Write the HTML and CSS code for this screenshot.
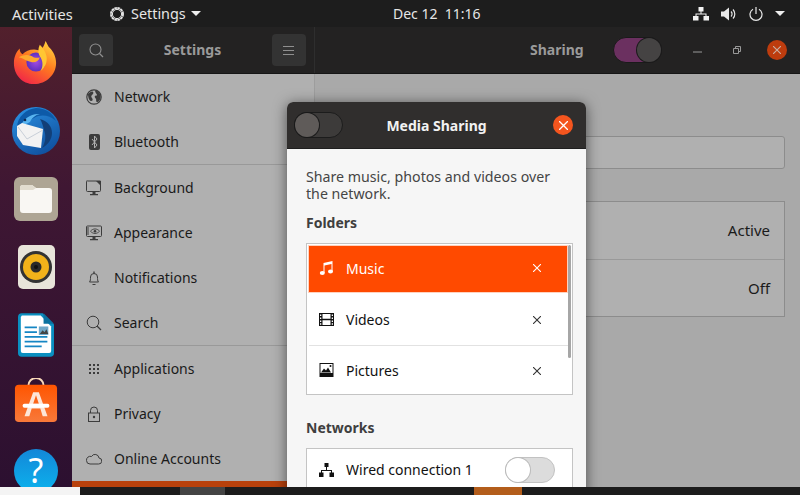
FILE: index.html

```html
<!DOCTYPE html>
<html lang="en">
<head>
  <meta charset="UTF-8" />
  <meta name="viewport" content="width=device-width, initial-scale=1.0"/>
  <title>Settings - Sharing</title>
  <link rel="stylesheet" href="styles.css">
</head>
<body>
  <div class="topbar">
    <div class="top-left">
      <span class="activities">Activities</span>
      <svg class="gear" width="16" height="16" viewBox="0 0 16 16"><circle cx="8" cy="8" r="6" fill="none" stroke="#e4e4e4" stroke-width="2" stroke-dasharray="2.6 .5"/><circle cx="8" cy="8" r="4.6" fill="none" stroke="#e4e4e4" stroke-width="1"/></svg>
      <span class="app-name">Settings</span>
      <span class="caret"></span>
    </div>
    <div class="clock">Dec 12&nbsp;&nbsp;11:16</div>
    <div class="top-right">
      <svg width="16" height="14" viewBox="0 0 16 14"><path d="M5.5 0h5v4.500h-5zM0 9h5.500v4.500H0zM10.500 9H16v4.500h-5.500zM7.500 4.500h1V6.500H13.500V9h-1V7.500h-9V9h-1V6.500h5z" fill="#f2f2f2"/></svg>
      <svg width="16" height="14" viewBox="0 0 16 14"><path d="M0 4.500h3L8 .5v13l-5-4H0z" fill="#e8e8e8"/><path d="M10 4.500a3.500 3.500 0 0 1 0 5M12 2.500a6.500 6.500 0 0 1 0 9" fill="none" stroke="#e8e8e8" stroke-width="1.200"/></svg>
      <svg width="14" height="14" viewBox="0 0 14 14"><path d="M4 2.200a6 6 0 1 0 6 0M7 0v7" fill="none" stroke="#e8e8e8" stroke-width="1.200"/></svg>
      <span class="caret"></span>
    </div>
  </div>

  <div class="desktop">
    <div class="dock">
      <svg class="dock-icon" width="46" height="46" viewBox="0 0 48 48">
        <defs>
          <linearGradient id="fx" x1="0.8" y1="0" x2="0.2" y2="1"><stop offset="0" stop-color="#ffd33d"/><stop offset=".45" stop-color="#ff7a1f"/><stop offset="1" stop-color="#f0214a"/></linearGradient>
          <radialGradient id="fxp"><stop offset="0" stop-color="#a34be0"/><stop offset="1" stop-color="#5c2fc0"/></radialGradient>
          <linearGradient id="tb" x1="0.2" y1="0" x2="0.8" y2="1"><stop offset="0" stop-color="#2a8fe0"/><stop offset="1" stop-color="#0e4d9c"/></linearGradient>
          <linearGradient id="help" x1="0" y1="0" x2="0" y2="1"><stop offset="0" stop-color="#1387d8"/><stop offset="1" stop-color="#0cb3ee"/></linearGradient>
          <linearGradient id="shop" x1="0" y1="0" x2="0" y2="1"><stop offset="0" stop-color="#ff5500"/><stop offset="1" stop-color="#f8793a"/></linearGradient>
        </defs>
        <path d="M2 25C2 18 5 13 8 10c0 3 1 5 3 6 3-3 7-5 12-5 3 0 4 1 6 1 3-2 5-6 6-10 2 3 2 5 5 8 3 3 6 9 6 15 0 12-10 22-23 22S2 37 2 25z" fill="url(#fx)"/>
        <circle cx="25" cy="24" r="10" fill="url(#fxp)"/>
        <path d="M7 19c5-3 10-3 14-1 2 2 6 2 8 1-1 4-5 6-9 5-5-1-8-4-13-5z" fill="#ffa92e"/>
        <path d="M29 6c3 3 6 7 7 12 1 5-1 12-6 15 3-5 2-11-1-15-2-3-2-8 0-12z" fill="#ffc633"/>
      </svg>
      <svg class="dock-icon" width="48" height="48" viewBox="0 0 48 48">
        <circle cx="24" cy="24" r="24" fill="url(#tb)"/>
        <path d="M28 12c8 2 12 8 12 14s-4 12-10 15c4-6 4-13 2-18-1-4-2-8-4-11z" fill="#123f78"/>
        <path d="M5 21C5 9 15 2 24 1c9 0 17 5 20 13-7-6-15-7-22-3-6 3-8 7-17 10z" fill="#0d5aa8"/>
        <path d="M8 20c3-8 11-14 20-13-5 1-8 4-10 8z" fill="#58b4f0"/>
        <path d="M5 19l5-3 21 6-2 19-18-3-6-9z" fill="#f2f2f2"/>
        <path d="M6 20l9 12 16-9" fill="none" stroke="#c8cfd8" stroke-width="1"/>
        <circle cx="13" cy="13" r="1.300" fill="#102a50"/>
      </svg>
      <div class="files-tile">
        <svg width="32" height="28" viewBox="0 0 32 28"><path d="M0 3a3 3 0 0 1 3-3h9l4 3h13a3 3 0 0 1 3 3v19a3 3 0 0 1-3 3H3a3 3 0 0 1-3-3z" fill="#f9f7f3"/><path d="M0 3a3 3 0 0 1 3-3h9l4 3-3 2H0z" fill="#e2dccf"/></svg>
      </div>
      <div class="rhythm-tile">
        <svg width="32" height="32" viewBox="0 0 32 32"><circle cx="16" cy="16" r="16" fill="#333"/><circle cx="16" cy="16" r="13" fill="#f1b21a"/><circle cx="16" cy="16" r="5.500" fill="#2a2a2a"/><circle cx="16" cy="16" r="2" fill="#111"/></svg>
      </div>
      <svg class="dock-icon" width="36" height="44" viewBox="0 0 38 46">
        <path d="M4 0h22l12 12v30a4 4 0 0 1-4 4H4a4 4 0 0 1-4-4V4a4 4 0 0 1 4-4z" fill="#0a8fc0"/>
        <path d="M4 2.500h20L35 14v26a2 2 0 0 1-2 2H5a2 2 0 0 1-2-2V4z" fill="#fff"/>
        <path d="M27 0l11 11H27z" fill="#0a72a0"/>
        <path d="M7 14h13v2H7zM7 19h13v2H7zM7 24h24v2H7zM7 29h24v2H7zM7 34h18v2H7z" fill="#1586c4"/>
        <path d="M22 14h10v9H22z" fill="#6fa8c8"/>
        <path d="M23 22l3-4 2 2 2-3 2 5z" fill="#444"/>
      </svg>
      <svg class="dock-icon" width="44" height="44" viewBox="0 0 46 46" preserveAspectRatio="none">
        <path d="M15 8a8 8 0 0 1 16 0" fill="none" stroke="#f8d8b8" stroke-width="2"/>
        <rect x="1" y="7" width="44" height="39" rx="4" fill="url(#shop)"/>
        <path d="M20 15h6l9 25h-5l-2.500-8h-9L16 40h-5zM20 27h6l-3-9z" fill="#fde6d8"/>
        <rect x="9" y="27" width="28" height="4" rx="2" fill="#fff"/>
      </svg>
      <svg class="dock-icon" width="44" height="44" viewBox="0 0 44 44">
        <circle cx="22" cy="22" r="22" fill="url(#help)"/>
        <text class="help-mark" x="22" y="34" text-anchor="middle">?</text>
      </svg>
    </div>

    <div class="window">
      <div class="headerbar">
        <div class="header-left">
          <div class="header-btn">
            <svg width="15" height="15" viewBox="0 0 15 15"><circle cx="6.500" cy="6.500" r="5.500" fill="none" stroke="#8f8f8f" stroke-width="1.100"/><path d="M10.500 10.500L14 14" stroke="#8f8f8f" stroke-width="1.300"/></svg>
          </div>
          <span class="header-title">Settings</span>
          <div class="header-btn">
            <svg width="11" height="9" viewBox="0 0 11 9"><path d="M0 .5h11M0 4.500h11M0 8.500h11" stroke="#8f8f8f" stroke-width="1"/></svg>
          </div>
        </div>
        <div class="header-right">
          <span class="header-title sharing-title">Sharing</span>
          <div class="switch-on"><span class="knob"></span></div>
          <svg class="win-min" width="9" height="2" viewBox="0 0 9 2"><path d="M0 1h9" stroke="#999" stroke-width="1"/></svg>
          <svg class="win-restore" width="8" height="8" viewBox="0 0 8 8"><path d="M.5 2.500h5v5h-5zM2.500 2.500v-2h5v5h-2" fill="none" stroke="#999" stroke-width="1"/></svg>
          <div class="win-close">
            <svg width="8" height="8" viewBox="0 0 8 8"><path d="M0 0l8 8M8 0L0 8" stroke="#c9b0a6" stroke-width="1.100"/></svg>
          </div>
        </div>
      </div>

      <div class="window-body">
        <div class="sidebar">
          <div class="side-row">
            <svg width="16" height="16" viewBox="0 0 16 16"><circle cx="8" cy="8" r="7.200" fill="none" stroke="#3c3c3c" stroke-width="1.200"/><path d="M2 5c2-2 4-3 5-2s0 2-1 3-1 2 0 3 1 3-1 3-3-4-3-7zM9 1.500c3 0 5 2 5.500 5 .5 3-1 6-3 6.500s-1-2-1.500-3-2-2-1-3 2 0 2-1-2-2-2-4.500z" fill="#3c3c3c"/></svg>
            <span>Network</span>
          </div>
          <div class="side-row">
            <svg width="16" height="16" viewBox="0 0 16 16"><rect x="3" y="0" width="11" height="16" rx="2" fill="#3c3c3c"/><path d="M6 5l5 6-2.500 3V2L11 5l-5 6" fill="none" stroke="#b0b0b0" stroke-width="1"/></svg>
            <span>Bluetooth</span>
          </div>
          <div class="side-sep"></div>
          <div class="side-row">
            <svg width="16" height="16" viewBox="0 0 16 16"><path d="M1.500 1h13a1 1 0 0 1 0 .5v9a1 1 0 0 1-1 1h-12a1 1 0 0 1-1-1v-9a.5.5 0 0 1 1-.5z" fill="none" stroke="#3c3c3c" stroke-width="1"/><path d="M10 1h5v5z" fill="#3c3c3c"/><path d="M6.500 12h3v2h-3zM4 14h8v1.200H4z" fill="#3c3c3c"/></svg>
            <span>Background</span>
          </div>
          <div class="side-row">
            <svg width="16" height="16" viewBox="0 0 16 16"><rect x=".5" y="1" width="15" height="10.500" rx="1" fill="none" stroke="#3c3c3c"/><path d="M.5 3h2.500M.5 5h2.500M.5 7h2.500M.5 9h2.500" stroke="#3c3c3c"/><path d="M4.500 6.200c2.500-3 6.500-3 9 0-2.500 3-6.500 3-9 0z" fill="none" stroke="#3c3c3c" stroke-width=".9"/><circle cx="9" cy="6.200" r="1.300" fill="#3c3c3c"/><path d="M6.500 12h3v2h-3zM4 14h8v1.200H4z" fill="#3c3c3c"/></svg>
            <span>Appearance</span>
          </div>
          <div class="side-row">
            <svg width="16" height="16" viewBox="0 0 16 16"><path d="M3.500 12c1-1 1-3 1-5a3.500 3.500 0 0 1 7 0c0 2 0 4 1 5z" fill="none" stroke="#3c3c3c" stroke-width="1"/><path d="M6.500 14h3v1h-3zM7.300 1.500h1.400v2H7.300z" fill="#3c3c3c"/></svg>
            <span>Notifications</span>
          </div>
          <div class="side-row">
            <svg width="16" height="16" viewBox="0 0 16 16"><circle cx="7" cy="7" r="5.800" fill="none" stroke="#3c3c3c" stroke-width="1"/><path d="M11 11l4 4" stroke="#3c3c3c" stroke-width="1.300"/></svg>
            <span>Search</span>
          </div>
          <div class="side-sep"></div>
          <div class="side-row">
            <svg width="16" height="16" viewBox="0 0 16 16"><path d="M3 3h2v2H3zM7 3h2v2H7zM11 3h2v2h-2zM3 7h2v2H3zM7 7h2v2H7zM11 7h2v2h-2zM3 11h2v2H3zM7 11h2v2H7zM11 11h2v2h-2z" fill="#3c3c3c"/></svg>
            <span>Applications</span>
          </div>
          <div class="side-row">
            <svg width="16" height="16" viewBox="0 0 16 16"><rect x="2.500" y="7" width="11" height="8.500" fill="none" stroke="#3c3c3c" stroke-width="1"/><path d="M4.500 7V4.500a3.500 3.500 0 0 1 7 0V7" fill="none" stroke="#3c3c3c" stroke-width="1"/><circle cx="8" cy="11" r="1.200" fill="#3c3c3c"/></svg>
            <span>Privacy</span>
          </div>
          <div class="side-row">
            <svg width="16" height="16" viewBox="0 0 16 16"><path d="M4 13h8.500a3 3 0 0 0 .5-6 4 4 0 0 0-7.500-1.500A3.800 3.800 0 0 0 .5 9.500 3.500 3.500 0 0 0 4 13z" fill="none" stroke="#3c3c3c" stroke-width="1"/></svg>
            <span>Online Accounts</span>
          </div>
          <div class="side-strip"></div>
        </div>

        <div class="panel">
          <div class="name-entry"></div>
          <div class="panel-list">
            <div class="panel-row">Active</div>
            <div class="panel-row">Off</div>
          </div>
        </div>
      </div>

      <div class="dialog">
        <div class="dialog-head">
          <div class="switch-off-dark"><span class="knob"></span></div>
          <span class="dialog-title">Media Sharing</span>
          <div class="dialog-close">
            <svg width="9" height="9" viewBox="0 0 9 9"><path d="M0 0l9 9M9 0L0 9" stroke="#fff" stroke-width="1.300"/></svg>
          </div>
        </div>
        <div class="dialog-body">
          <p class="dialog-text">Share music, photos and videos over the network.</p>
          <h4 class="group-title">Folders</h4>
          <div class="folder-list">
            <div class="folder-row selected">
              <svg width="14" height="14" viewBox="0 0 14 14"><path d="M4 2l9-2v10.500h-1V3L5 4.500V12H4z" fill="#fff"/><ellipse cx="2.800" cy="12" rx="2.500" ry="1.900" fill="#fff"/><ellipse cx="11" cy="10.500" rx="2.500" ry="1.900" fill="#fff"/></svg>
              <span>Music</span>
              <svg class="row-x" width="8" height="8" viewBox="0 0 8 8"><path d="M0 0l8 8M8 0L0 8" stroke="#fff" stroke-width="1.100"/></svg>
            </div>
            <div class="folder-row">
              <svg width="15" height="13" viewBox="0 0 15 13"><path d="M0 0h15v13H0z" fill="#111"/><path d="M3.500 1h8v4.800h-8zM3.500 7.200h8V12h-8z" fill="#fff"/><path d="M1 1.500h1.300v1.500H1zM1 4.500h1.300V6H1zM1 7.500h1.300V9H1zM1 10.300h1.300v1.500H1zM12.700 1.500H14v1.500h-1.300zM12.700 4.500H14V6h-1.300zM12.700 7.500H14V9h-1.300zM12.700 10.300H14v1.500h-1.300z" fill="#fff"/></svg>
              <span>Videos</span>
              <svg class="row-x" width="8" height="8" viewBox="0 0 8 8"><path d="M0 0l8 8M8 0L0 8" stroke="#333" stroke-width="1.100"/></svg>
            </div>
            <div class="folder-row">
              <svg width="14" height="14" viewBox="0 0 14 14"><path d="M0 0h14v14H0z" fill="#111"/><path d="M1 1h12v9H1z" fill="#fff"/><path d="M1.500 9.500l3-4 2 2 2-3 3 5z" fill="#111"/><circle cx="11" cy="3" r="1" fill="#111"/></svg>
              <span>Pictures</span>
              <svg class="row-x" width="8" height="8" viewBox="0 0 8 8"><path d="M0 0l8 8M8 0L0 8" stroke="#333" stroke-width="1.100"/></svg>
            </div>
            <div class="list-scroll"></div>
          </div>
          <h4 class="group-title networks-title">Networks</h4>
          <div class="network-list">
            <div class="folder-row">
              <svg width="15" height="14" viewBox="0 0 15 14"><path d="M5.500 0h4v4h-4zM0 9.500h4.500V14H0zM10.500 9.500H15V14h-4.500zM7 4h1v3h5v3h-1V8H3v2H2V7h5z" fill="#111"/></svg>
              <span>Wired connection 1</span>
              <div class="switch-off"><span class="knob"></span></div>
            </div>
          </div>
        </div>
      </div>
    </div>
  </div>

  <div class="bottombar">
    <div class="task-light"></div>
    <div class="task-grey"></div>
    <div class="task-orange"></div>
  </div>
</body>
</html>
```

FILE: styles.css

```css
* { box-sizing: border-box; }
html, body { margin: 0; padding: 0; }
body { width: 800px; height: 495px; overflow: hidden; background: #1c1c1c; font-family: "Noto Sans", sans-serif; font-size: 14px; color: #1a1a1a; }

.topbar { height: 27px; background: #1d1d1d; color: #e6e6e6; display: flex; align-items: center; }
.top-left { width: 393px; display: flex; align-items: center; padding-left: 12px; }
.activities { width: 97px; font-size: 14.6px; }
.gear { margin-right: 6px; margin-left: 0; }
.app-name { margin-right: 5px; font-size: 14.4px; }
.caret { width: 0; height: 0; border-left: 5px solid transparent; border-right: 5px solid transparent; border-top: 5px solid #eee; }
.clock { flex: 1; }
.top-right { display: flex; align-items: center; gap: 12px; padding-right: 15px; }

.desktop { height: 460px; display: flex; overflow: hidden; }
.dock { width: 72px; flex: none; background: linear-gradient(180deg, #52202c 0%, #3f1733 35%, #2c1030 100%); display: flex; flex-direction: column; align-items: center; padding-top: 12px; }
.dock-icon { display: block; flex: none; }
.dock > :nth-child(1) { margin-bottom: 22px; margin-right: 2px; }
.dock > :nth-child(2) { margin-bottom: 22px; }
.dock > :nth-child(5) { margin-bottom: 21px; }
.dock > :nth-child(6) { margin-bottom: 27px; }
.files-tile { width: 44px; height: 44px; flex: none; margin-bottom: 24px; border-radius: 6px; background: #aea594; display: flex; align-items: center; justify-content: center; }
.rhythm-tile { width: 37px; height: 44px; flex: none; margin-bottom: 24px; border-radius: 5px; background: #e8e4da; display: flex; align-items: center; justify-content: center; }
.help-mark { font-family: "Noto Sans", sans-serif; font-size: 34px; fill: #fff; }

.window { flex: 1; position: relative; display: flex; flex-direction: column; background: #a9a9a9; }
.headerbar { height: 47px; flex: none; display: flex; background: #232222; border-bottom: 1px solid #161616; }
.header-left { width: 243px; flex: none; display: flex; align-items: center; justify-content: space-between; padding: 0 8px 0 7px; border-right: 1px solid #2e2e2e; }
.header-btn { width: 34px; height: 32px; border-radius: 4px; background: #333; display: flex; align-items: center; justify-content: center; }
.header-title { font-weight: 700; color: #9a9a9a; font-size: 14px; margin-bottom: 2px; }
.header-right { flex: 1; display: flex; align-items: center; }
.sharing-title { margin-left: 215px; width: 83px; }
.switch-on { width: 49px; height: 26px; border-radius: 13px; background: #6b3060; border: 1px solid #1a1a1a; display: flex; justify-content: flex-end; }
.knob { display: block; width: 24px; height: 24px; border-radius: 50%; background: #454343; box-shadow: 0 0 0 1px #1a1a1a; }
.win-min { margin-left: 31px; margin-top: 4px; }
.win-restore { margin-left: 31px; }
.win-close { width: 20px; height: 20px; margin-left: 26px; border-radius: 50%; background: #bd3c0e; display: flex; align-items: center; justify-content: center; }

.window-body { flex: 1; display: flex; min-height: 0; }
.sidebar { width: 243px; flex: none; background: #b0b0b0; display: flex; flex-direction: column; border-right: 1px solid #9d9d9d; }
.side-row { height: 45px; flex: none; display: flex; align-items: center; gap: 12px; padding-left: 14px; }
.side-row svg { flex: none; }
.side-sep { height: 1px; flex: none; background: #999; }
.side-strip { height: 6px; flex: none; background: #b8410c; }

.panel { flex: 1; padding: 62px 15px 0 15px; background: #a9a9a9; }
.name-entry { height: 33px; border: 1px solid #8c8c8c; border-radius: 3px; background: #b0b0b0; }
.panel-list { margin-top: 32px; border: 1px solid #8c8c8c; background: #b0b0b0; font-size: 15px; }
.panel-row { height: 57px; display: flex; align-items: center; justify-content: flex-end; padding-right: 14px; }
.panel-row:first-child { padding-bottom: 2px; }
.panel-row + .panel-row { border-top: 1px solid #999; }

.dialog { position: absolute; left: 215px; top: 75px; width: 299px; height: 420px; border-radius: 6px 6px 0 0; overflow: hidden; background: #f6f6f6; box-shadow: 0 2px 14px rgba(0,0,0,.55); }
.dialog-head { height: 47px; background: #302e2d; display: flex; align-items: center; padding: 0 13px 0 7px; border-bottom: 1px solid #1f1f1f; }
.switch-off-dark { width: 49px; height: 26px; border-radius: 13px; background: #3d3b3a; border: 1px solid #1c1c1c; }
.switch-off-dark .knob { background: #5f5b59; }
.dialog-title { flex: 1; margin-right: 23px; text-align: center; font-weight: 700; color: #f2f2f2; font-size: 14px; }
.dialog-close { width: 20px; height: 20px; border-radius: 50%; background: #f4551e; display: flex; align-items: center; justify-content: center; }
.dialog-body { padding: 19px 13px 0 19px; }
.dialog-text { margin: 0; width: 250px; font-size: 14.2px; line-height: 17px; color: #454545; }
.group-title { margin: 12px 0 0; font-size: 14px; line-height: 17px; font-weight: 700; color: #3f3f3f; }
.folder-list { position: relative; margin-top: 12px; height: 152px; padding: 2px; border: 1px solid #c4c4c4; background: #fff; }
.folder-row { height: 51px; display: flex; align-items: center; padding-left: 10px; position: relative; color: #111; }
.folder-row > svg:first-child { width: 15px; flex: none; margin-right: 12px; }
.folder-row.selected { height: 46px; padding-bottom: 2px; margin-bottom: 2px; background: #ff4a00; color: #fff; margin-right: 3px; box-shadow: 0 0 0 1px rgba(255,74,0,.25); }
.folder-row + .folder-row + .folder-row { border-top: 1px solid #e2e2e2; padding-bottom: 2px; }
.row-x { position: absolute; right: 29px; top: 50%; margin-top: -4px; }
.selected .row-x { right: 26px; margin-top: -5px; }
.list-scroll { position: absolute; right: 1px; top: 1px; width: 3px; height: 113px; border-radius: 2px; background: #a6a6a6; }
.networks-title { margin-top: 24px; }
.network-list { margin-top: 12px; height: 60px; border: 1px solid #c4c4c4; background: #fff; padding: 0 2px; }
.network-list .folder-row { height: 43px; padding-bottom: 2px; }
.switch-off { position: absolute; right: 15px; top: 8px; width: 50px; height: 26px; border-radius: 13px; background: #dcdcdc; border: 1px solid #c2c2c2; }
.switch-off .knob { background: #fff; box-shadow: 0 0 0 1px #bbb; }

.bottombar { height: 8px; display: flex; background: #1c1c1c; }
.task-light { width: 80px; background: #f4f4f4; }
.task-grey { width: 45px; margin-left: 100px; background: #444; }
.task-orange { width: 48px; margin-left: 249px; background: #b35d1b; }
```
